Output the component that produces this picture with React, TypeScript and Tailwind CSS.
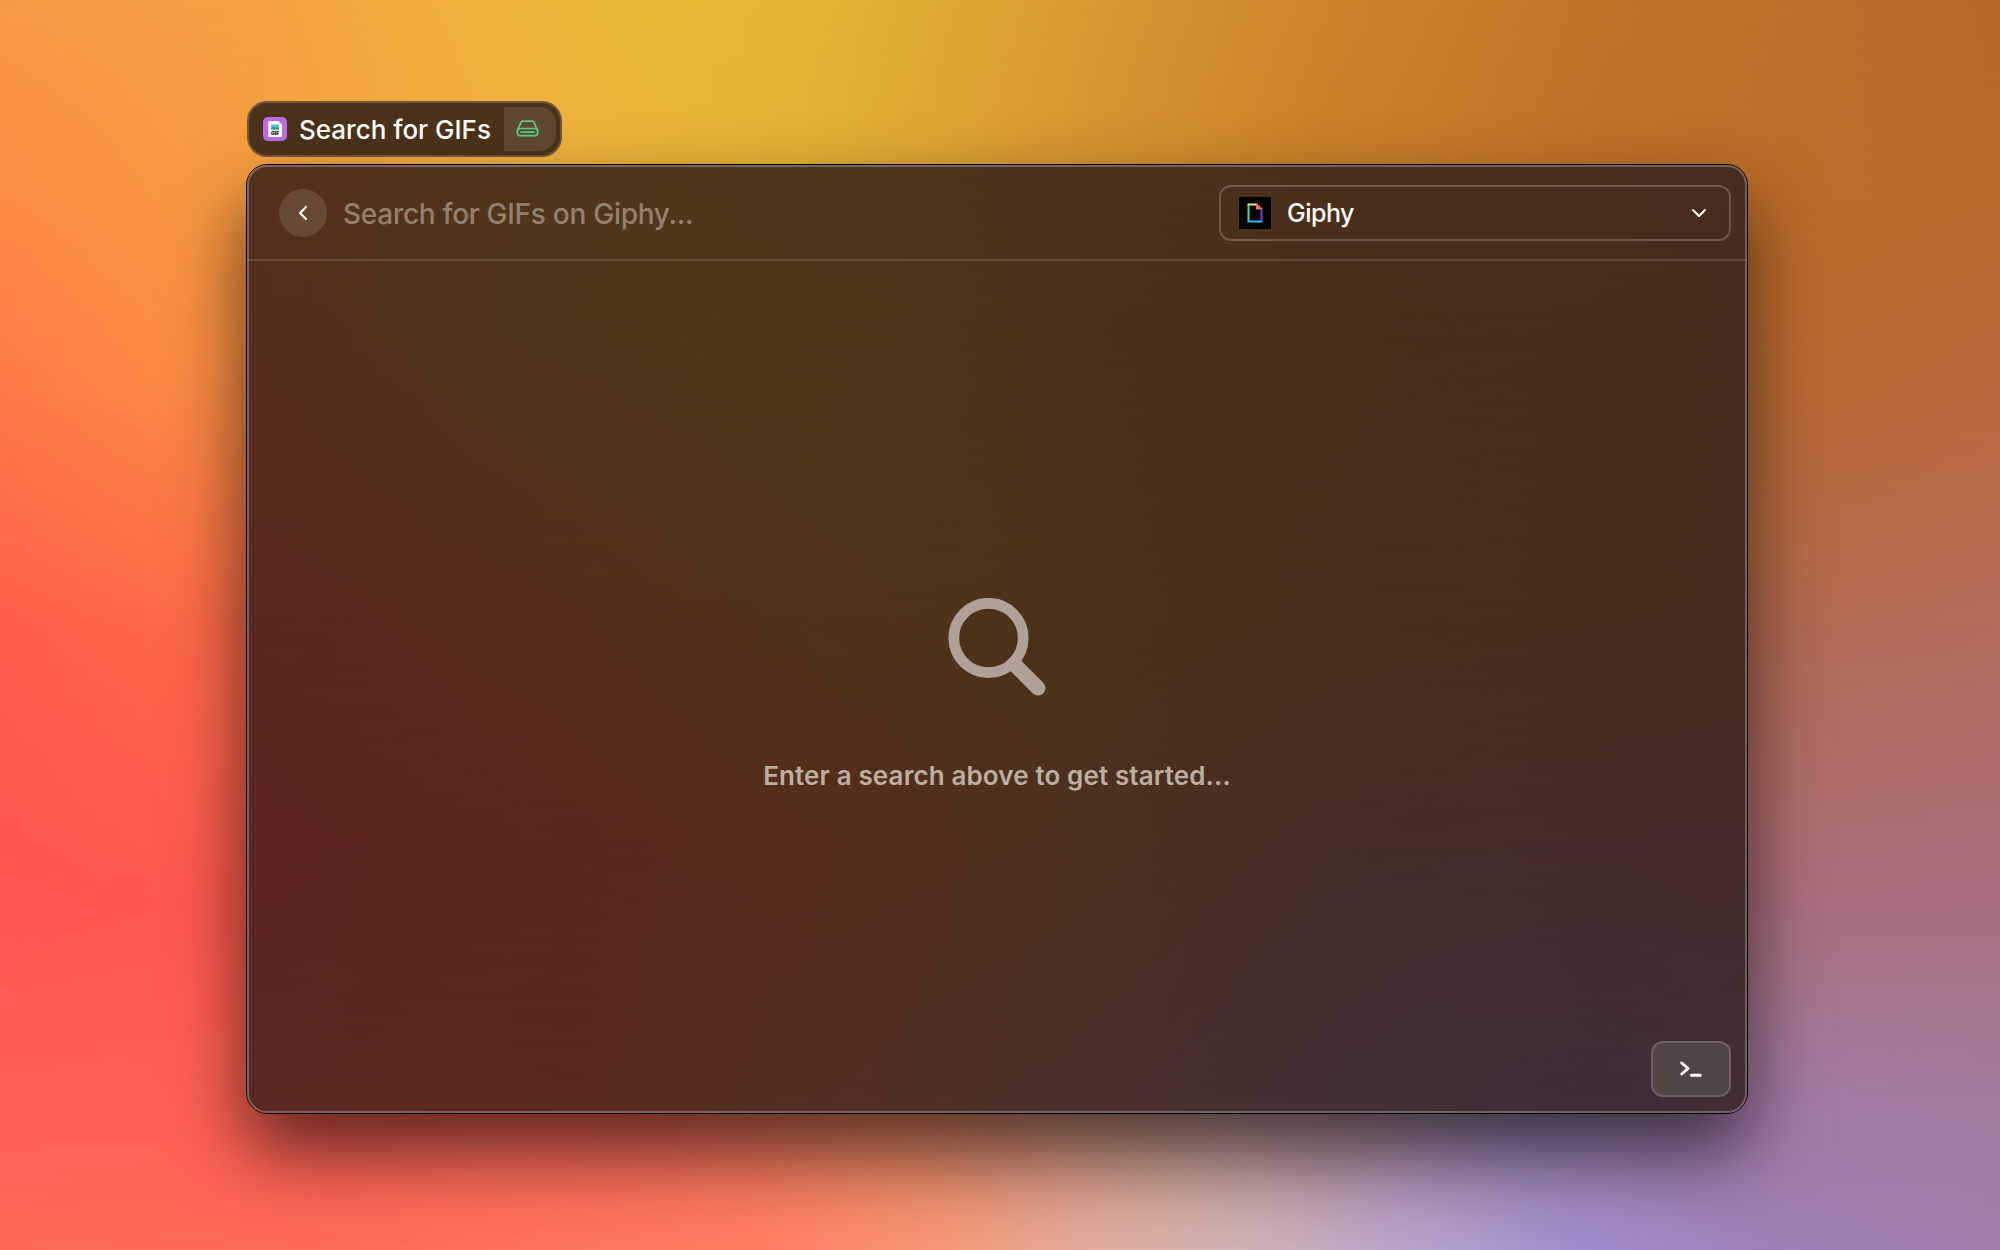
const layer = 'col-start-1 row-start-1 size-full';

/* Rows of horizontal colour ramps, faded into each other from top to bottom. */
function Wallpaper() {
  return (
    <div className="col-start-1 row-start-1 grid h-full w-full">
      <div className={`${layer} bg-[linear-gradient(90deg,#f79a45,#f4a240_13%,#f0b23d_23%,#e9bb35_33%,#e2b434_42%,#d99c30_53%,#cc862b_66%,#c27427_80%,#b86a2c)]`} />
      <div className={`${layer} bg-[linear-gradient(90deg,#fb8b43,#f69d40_13%,#efb13d_27%,#e5b035_40%,#d8982f_52%,#c87f27_66%,#be7028_80%,#b96b2d)] mask-[linear-gradient(transparent_0,#000_200px)]`} />
      <div className={`${layer} bg-[linear-gradient(90deg,#fe7847,#fa8843_9%,#f09a40_25%,#d89a30_50%,#c07228_75%,#b96b34_90%,#b96a3e)] mask-[linear-gradient(transparent_200px,#000_400px)]`} />
      <div className={`${layer} bg-[linear-gradient(90deg,#ff5e4a,#fd6a47_10%,#d07040_40%,#b86a40_80%,#b36b52_90%,#b36b5a)] mask-[linear-gradient(transparent_400px,#000_625px)]`} />
      <div className={`${layer} bg-[linear-gradient(90deg,#ff5551,#fe594e_12%,#d07060_50%,#ae6c6e_80%,#a9707c_90%,#a87080)] mask-[linear-gradient(transparent_625px,#000_900px)]`} />
      <div className={`${layer} bg-[linear-gradient(90deg,#ff6155,#ff6254_12%,#f86b58_32%,#e88660_45%,#c49a90_60%,#9b82b0_76%,#a27ba6_90%,#a27c9e)] mask-[linear-gradient(transparent_900px,#000_1120px)]`} />
      <div className={`${layer} bg-[linear-gradient(90deg,#ff6857,#ff6a58_18%,#ff7e60_38%,#f59876_47%,#e0ae9f_55%,#ccb2b6_63%,#b5a2cc_71%,#a08ccb_79%,#9c82b8_88%,#a080ae)] mask-[linear-gradient(transparent_1120px,#000_1250px)]`} />
    </div>
  );
}

function PanelTint() {
  return (
    <div className="col-start-1 row-start-1 grid h-full w-full">
      <div className={`${layer} bg-[linear-gradient(90deg,#55301b,#53331b_12%,#4f361a_25%,#4c361a_42%,#4b321b_56%,#4b2f1e_75%,#482c20)]`} />
      <div className={`${layer} bg-[linear-gradient(90deg,#552e1b,#4f351a_18%,#4e3819_32%,#4b3619_45%,#4b301b_58%,#482d1b_82%,#472b1e)] mask-[linear-gradient(transparent,#000_150px)]`} />
      <div className={`${layer} bg-[linear-gradient(90deg,#592820,#562d1b_20%,#503219_38%,#4c331a_52%,#482e1c_72%,#462b1e)] mask-[linear-gradient(transparent_150px,#000_450px)]`} />
      <div className={`${layer} bg-[linear-gradient(90deg,#5b2522,#59281e_22%,#552d1c_40%,#4e301f_54%,#442e27_72%,#432b28)] mask-[linear-gradient(transparent_450px,#000_680px)]`} />
      <div className={`${layer} bg-[linear-gradient(90deg,#5a2822,#582920_22%,#532e24_40%,#48302b_58%,#3e2f35_78%,#3c2d39_90%,#412d34)] mask-[linear-gradient(transparent_680px,#000_930px)]`} />
    </div>
  );
}

function GifIcon() {
  return (
    <svg className="size-6" viewBox="0 0 24 24">
      <rect width="24" height="24" rx="5" fill="#bd6be4" />
      <path d="M5.300 5.200A1.200 1.200 0 0 1 6.500 4H15.500L19 7.500V18.800A1.200 1.200 0 0 1 17.800 20H6.500A1.200 1.200 0 0 1 5.300 18.800Z" fill="#fff" />
      <path d="M15.500 4L19 7.500H15.500Z" fill="#dcd6e4" />
      <rect x="8" y="7.500" width="8" height="5" fill="#4fc3e8" />
      <path d="M8 12.500V11L10.500 9.500L12.500 11L14 10L16 11.500V12.500Z" fill="#2b9c8c" />
      <text x="12.100" y="18" textAnchor="middle" fontFamily="Inter, sans-serif" fontSize="5" fontWeight="900" fill="#111">GIF</text>
    </svg>
  );
}

function GiphyIcon() {
  return (
    <svg className="size-8" viewBox="0 0 32 32">
      <rect width="32" height="32" fill="#000" />
      <g transform="translate(8.500 6.500)">
        <rect x="0" y="0" width="9" height="2" fill="#f3ee6b" />
        <rect x="0" y="1.500" width="2" height="16" fill="#3ae28b" />
        <rect x="0" y="17" width="15" height="2" fill="#35b8f5" />
        <rect x="13" y="6" width="2" height="11.500" fill="#8038e0" />
        <path d="M8.500 0H10.500V2H12.700V4H15V6H8.500Z" fill="#f56a68" />
      </g>
    </svg>
  );
}

function TitlePill() {
  return (
    <div className="flex h-14 w-[315px] items-center rounded-[20px] border-2 border-[#75583a] bg-[#4c321a] pl-3.5 pr-1">
      <GifIcon />
      <span className="ml-3 w-[205px] whitespace-nowrap pt-0.5 text-[26px] font-medium leading-none text-white">Search for GIFs</span>
      <span className="flex h-11 w-[52px] items-center rounded-r-2xl bg-[#5f4a31] pb-px pl-3">
        <svg className="h-[17px] w-[23px]" viewBox="0 0 24 18" fill="none" stroke="#5fc98b" strokeWidth="1.800" strokeLinecap="round" strokeLinejoin="round">
          <path d="M1.500 11L4.700 3.200Q5.500 1.200 7.500 1.200H16.500Q18.500 1.200 19.300 3.200L22.500 11" />
          <rect x="1.200" y="9" width="21.600" height="7.500" rx="3" />
          <path d="M5 12.800H19" />
        </svg>
      </span>
    </div>
  );
}

function Header() {
  return (
    <header className="-mx-0.5 flex h-[94px] items-center border-b-2 border-white/12 pl-8 pr-4">
      <button className="flex size-12 items-center justify-center rounded-full bg-white/12">
        <svg className="h-4 w-2.5" viewBox="0 0 10 16" fill="none" stroke="#fff" strokeWidth="2.200" strokeLinecap="round" strokeLinejoin="round">
          <path d="M8 2L2 8L8 14" />
        </svg>
      </button>
      <span className="ml-4 flex-1 whitespace-nowrap pt-0.5 text-[28px] font-medium leading-none tracking-[-0.27px] text-white/40">Search for GIFs on Giphy...</span>
      <div className="flex h-14 w-[512px] items-center rounded-xl border-2 border-white/20 pl-[18px] pr-[22px]">
        <GiphyIcon />
        <span className="ml-4 flex-1 text-[25px] font-medium leading-none tracking-[-0.5px] text-white">Giphy</span>
        <svg className="h-2.5 w-4" viewBox="0 0 16 10" fill="none" stroke="#fff" strokeWidth="2" strokeLinecap="round" strokeLinejoin="round">
          <path d="M2 2L8 8L14 2" />
        </svg>
      </div>
    </header>
  );
}

function EmptyState() {
  return (
    <main className="flex flex-1 flex-col items-center pt-[337px]">
      <svg className="size-[98px]" viewBox="0 0 98 98" fill="none" stroke="#afa197">
        <circle cx="40.500" cy="40" r="34.700" strokeWidth="10.800" />
        <path d="M66 66L90 90" strokeWidth="15" strokeLinecap="round" />
      </svg>
      <p className="mt-16 whitespace-nowrap text-[26px] font-semibold leading-8 tracking-[0.12px] text-[#bcaea3]">Enter a search above to get started...</p>
    </main>
  );
}

export default function App() {
  return (
    <div className="grid h-[1250px] w-[2000px] overflow-hidden font-['Inter',sans-serif]">
      <Wallpaper />
      <div className="relative col-start-1 row-start-1 flex flex-col pl-[246px] pt-[101px]">
        <div className="h-[63px] pl-px">
          <TitlePill />
        </div>
        <div className="grid h-[950px] w-[1502px] overflow-hidden rounded-[21px] border border-black shadow-[0_38px_76px_rgba(0,0,0,0.62)]">
          <PanelTint />
          <div className="relative col-start-1 row-start-1 flex flex-col rounded-[20px] border-2 border-white/25">
            <Header />
            <EmptyState />
            <footer className="flex h-[70px] items-start justify-end pr-3.5">
              <button className="flex h-14 w-20 items-center justify-center rounded-xl border-2 border-white/15 bg-[#504543]">
                <svg className="h-4 w-[22px]" viewBox="0 0 22 16" fill="none" stroke="#fff" strokeWidth="3" strokeLinecap="round" strokeLinejoin="round">
                  <path d="M1.800 2L8 7.500L1.800 13M11.500 14.200H20.300" />
                </svg>
              </button>
            </footer>
          </div>
        </div>
      </div>
    </div>
  );
}
